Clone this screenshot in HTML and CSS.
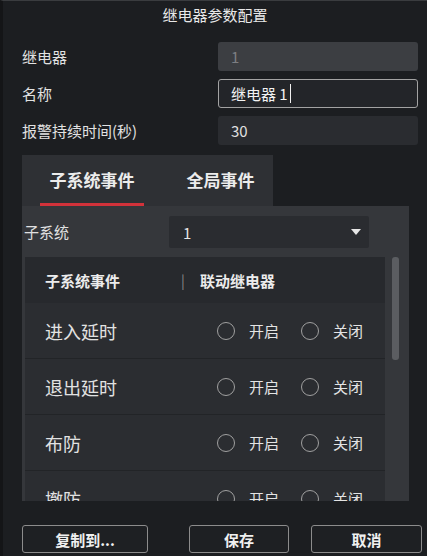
FILE: index.html
```html
<!DOCTYPE html>
<html lang="zh">
<head>
<meta charset="utf-8">
<title>继电器参数配置</title>
<link rel="stylesheet" href="styles.css">
</head>
<body>
<div class="window">
  <div class="title">继电器参数配置</div>
  <div class="form">
    <div class="frow">
      <div class="flabel">继电器</div>
      <div class="field disabled">1</div>
    </div>
    <div class="frow">
      <div class="flabel">名称</div>
      <div class="field focused">继电器 1<span class="caret"></span></div>
    </div>
    <div class="frow">
      <div class="flabel">报警持续时间(秒)</div>
      <div class="field">30</div>
    </div>
  </div>

  <div class="tabs">
    <div class="tabbar">
      <div class="tab active">子系统事件</div>
      <div class="tab">全局事件</div>
    </div>
    <div class="panel">
      <div class="selrow">
        <div class="sellabel">子系统</div>
        <div class="select">
          <span>1</span>
          <svg class="tri" width="10" height="6" viewBox="0 0 10 6"><path d="M0 0H10L5 6Z" fill="#e6e6e6"/></svg>
        </div>
      </div>
      <div class="tablewrap">
        <div class="table">
          <div class="thead">
            <div class="c1">子系统事件</div>
            <div class="sep">|</div>
            <div class="c2">联动继电器</div>
          </div>
          <div class="trow">
            <div class="c1">进入延时</div>
            <div class="radios">
              <span class="radio"></span><span class="rlabel">开启</span>
              <span class="radio"></span><span class="rlabel">关闭</span>
            </div>
          </div>
          <div class="trow">
            <div class="c1">退出延时</div>
            <div class="radios">
              <span class="radio"></span><span class="rlabel">开启</span>
              <span class="radio"></span><span class="rlabel">关闭</span>
            </div>
          </div>
          <div class="trow">
            <div class="c1">布防</div>
            <div class="radios">
              <span class="radio"></span><span class="rlabel">开启</span>
              <span class="radio"></span><span class="rlabel">关闭</span>
            </div>
          </div>
          <div class="trow">
            <div class="c1">撤防</div>
            <div class="radios">
              <span class="radio"></span><span class="rlabel">开启</span>
              <span class="radio"></span><span class="rlabel">关闭</span>
            </div>
          </div>
        </div>
        <div class="scrollbar"></div>
      </div>
    </div>
  </div>

  <div class="footer">
    <div class="btn b1">复制到...</div>
    <div class="btn b2">保存</div>
    <div class="btn b3">取消</div>
  </div>
</div>
</body>
</html>
```

FILE: styles.css
```css
* { box-sizing: border-box; }
html, body {
  margin: 0;
  padding: 0;
  background: #1b1d20;
}
body {
  font-family: "Noto Sans CJK SC", "Noto Sans", sans-serif;
  color: #e4e4e4;
}
.window {
  width: 427px;
  height: 556px;
  overflow: hidden;
  background: #1c1e21;
  border-top: 1px solid #3a3c3f;
  border-left: 3px solid #141517;
}
.title {
  height: 27px;
  line-height: 27px;
  text-align: center;
  font-size: 15px;
  color: #e8e8e8;
}
.form {
  margin-top: 14px;
  padding-left: 19px;
  display: flex;
  flex-direction: column;
  gap: 8px;
}
.frow {
  display: flex;
  align-items: center;
  height: 29px;
}
.flabel {
  width: 196px;
  font-size: 15px;
  line-height: 20px;
  color: #e2e2e2;
}
.field {
  width: 200px;
  height: 29px;
  border-radius: 3px;
  background: #2a2c30;
  font-size: 15px;
  line-height: 29px;
  padding-left: 13px;
  color: #e0e0e0;
  display: flex;
  align-items: center;
}
.field.disabled {
  background: #3c3e42;
  color: #7c7e82;
}
.field.focused {
  background: #232529;
  border: 1.5px solid #a3a3a3;
  padding-left: 12px;
  color: #f2f2f2;
}
.caret {
  display: inline-block;
  width: 1px;
  height: 19px;
  background: #f0f0f0;
  margin-left: 2px;
}
.tabs {
  margin-top: 10px;
  margin-left: 19px;
  width: 387px;
}
.tabbar {
  display: flex;
  width: 251px;
  height: 51px;
  background: #2e3034;
  padding-left: 18px;
  gap: 24px;
}
.tab {
  width: 104px;
  height: 51px;
  display: flex;
  align-items: center;
  justify-content: center;
  font-size: 17px;
  font-weight: bold;
  color: #ececec;
  border-bottom: 3px solid transparent;
}
.tab.active {
  border-bottom-color: #d2323a;
}
.tab + .tab {
  width: 105px;
}
.panel {
  height: 295px;
  background: #35373b;
  padding: 10px 0 0 3px;
  overflow: hidden;
}
.selrow {
  display: flex;
  align-items: center;
  height: 32px;
}
.sellabel {
  width: 145px;
  font-size: 15px;
  line-height: 20px;
  color: #e0e0e0;
  margin-left: -1px;
}
.select {
  width: 200px;
  height: 32px;
  background: #2a2c30;
  border-radius: 2px;
  display: flex;
  align-items: center;
  justify-content: space-between;
  padding: 0 8px 0 14px;
  font-size: 15px;
  color: #e6e6e6;
}
.tablewrap {
  margin-top: 9px;
  display: flex;
  height: 244px;
  overflow: hidden;
}
.table {
  width: 360px;
}
.thead {
  height: 46px;
  background: #27292d;
  display: flex;
  align-items: center;
  font-size: 15px;
  font-weight: bold;
  color: #ececec;
}
.thead .c1 {
  width: 156px;
  padding-left: 20px;
}
.sep {
  font-weight: normal;
  color: #8a8a8a;
  width: 19px;
  font-size: 14px;
}
.trow {
  height: 56px;
  background: #2b2d31;
  border-bottom: 1px solid #222427;
  display: flex;
  align-items: center;
}
.trow .c1 {
  width: 192px;
  padding-left: 20px;
  font-size: 18px;
  line-height: 24px;
  color: #e2e2e2;
}
.radios {
  display: flex;
  align-items: center;
}
.radio {
  width: 18px;
  height: 18px;
  border: 1.5px solid #a0a0a0;
  border-radius: 50%;
  margin-right: 14px;
}
.rlabel {
  font-size: 15px;
  line-height: 20px;
  color: #e4e4e4;
  margin-right: 22px;
}
.scrollbar {
  width: 7px;
  height: 103px;
  margin-left: 7px;
  background: #5b5d61;
  border-radius: 3px;
  flex: none;
}
.footer {
  margin-top: 24px;
  display: flex;
  padding-left: 19px;
}
.btn {
  height: 28px;
  border: 1px solid #8c8c8c;
  border-radius: 3px;
  background: #1e2023;
  display: flex;
  align-items: center;
  justify-content: center;
  font-size: 15px;
  font-weight: bold;
  color: #f0f0f0;
}
.b1 { width: 126px; }
.b2 { width: 100px; margin-left: 41px; }
.b3 { width: 111px; margin-left: 22px; }
```
